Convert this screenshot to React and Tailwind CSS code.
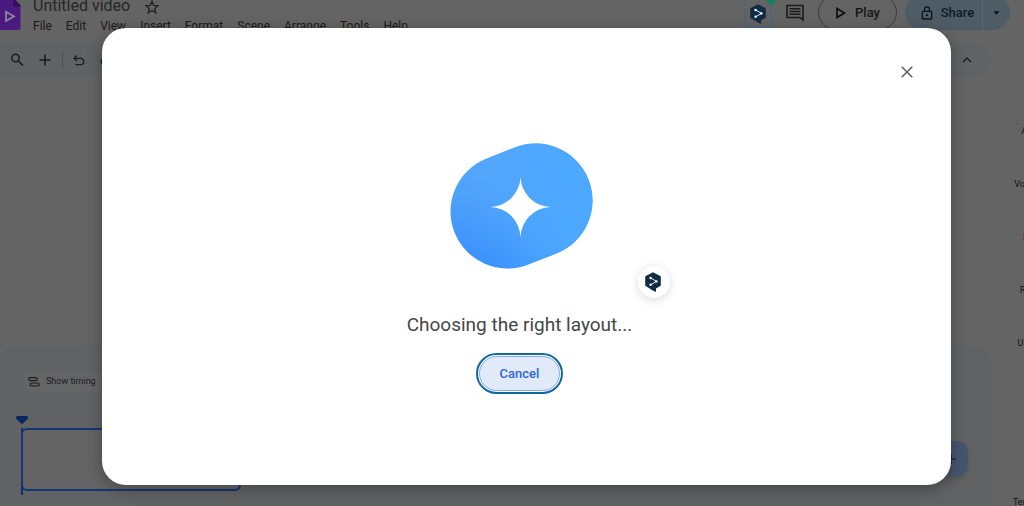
import React from "react";

function DeepLMark({ className }) {
  return (
    <svg viewBox="0 0 16 20" className={className} aria-hidden="true">
      <path
        d="M8 0.2 15.3 4.1Q15.8 4.4 15.8 5V13.2Q15.8 13.8 15.3 14.1L11 16.5V20L7.4 18.3 0.7 14.1Q0.2 13.8 0.2 13.2V5Q0.2 4.4 0.7 4.1Z"
        fill="#0f2b46"
      />
      <path d="M5.6 6 11.6 9.4 5.6 12.8" fill="none" stroke="#fff" strokeWidth="0.9" />
      <circle cx="5.6" cy="6" r="1.2" fill="#fff" />
      <circle cx="11.4" cy="9.4" r="1.2" fill="#fff" />
      <circle cx="5.6" cy="12.8" r="1.2" fill="#fff" />
    </svg>
  );
}

const menus = ["File", "Edit", "View", "Insert", "Format", "Scene", "Arrange", "Tools", "Help"];
const tools = ["Avatar", "Voiceover", "Icons", "Record", "Uploads"];

function Header() {
  return (
    <header className="flex h-9 items-start">
      <svg viewBox="0 0 21 30" className="h-[30px] w-[21px] shrink-0" aria-hidden="true">
        <path d="M0 0H13L20.500 7V28Q20.500 30 18.500 30H0Z" fill="#4a1a80" />
        <path d="M13 0V5Q13 7 15 7H20.500V5L15.500 0Z" fill="#35105f" />
        <path d="M6 11.800V21L14 16.400Z" fill="none" stroke="#8d829a" strokeWidth="1.800" />
      </svg>
      <div className="-mt-1 ml-3 flex-1">
        <div className="flex h-5 items-center gap-[14px]">
          <h1 className="text-[16px] leading-5 text-[#262626]">Untitled video</h1>
          <button aria-label="Star" className="pt-[2px]">
            <svg viewBox="0 0 24 24" className="h-4 w-4" fill="none" stroke="#222" strokeWidth="2">
              <path d="M12 3.500 14.500 9.500 21 10 16 14.300 17.600 20.700 12 17.300 6.400 20.700 8 14.300 3 10 9.500 9.500Z" />
            </svg>
          </button>
        </div>
        <nav className="flex gap-[14px] text-[12px] leading-5 text-[#1a1a1a]">
          {menus.map((m) => (
            <button key={m}>{m}</button>
          ))}
        </nav>
      </div>
      <div className="flex items-start pr-[14px]">
        <button
          aria-label="DeepL"
          className="relative flex h-7 w-7 items-center justify-center border border-t-0 border-[#3f6b82] bg-[#646464]"
        >
          <DeepLMark className="h-5 w-4" />
          <span className="absolute -right-1 -top-1 h-2 w-2 rounded-full bg-[#07875f]" />
        </button>
        <button aria-label="Comments" className="ml-[14px] mt-1">
          <svg viewBox="0 0 18 18" className="h-[18px] w-[18px]" fill="none" stroke="#1b1b1b" strokeWidth="1.600">
            <path d="M1 1.500H17V16L14 13.500H1Z" />
            <path d="M3.500 4.700H14.500M3.500 7.500H14.500M3.500 10.300H14.500" strokeWidth="1.400" />
          </svg>
        </button>
        <button className="-mt-[5px] ml-[14px] flex h-[35px] w-[79px] items-center justify-center gap-2 rounded-full border border-[#3c3c3c] text-[13px] font-medium text-[#161616]">
          <svg viewBox="0 0 12 12" className="h-3 w-3" fill="none" stroke="#0c0c0c" strokeWidth="1.600">
            <path d="M2 1.500V10.500L9.500 6Z" />
          </svg>
          Play
        </button>
        <div className="-mt-[5px] ml-2 flex h-[35px] overflow-hidden rounded-full bg-[#4e5c66] text-[13px] font-medium text-[#0d1a24]">
          <button className="flex w-[77px] items-center justify-center gap-2 pl-2">
            <svg viewBox="0 0 14 16" className="h-[14px] w-3" fill="none" stroke="#07131d" strokeWidth="1.500">
              <rect x="1.500" y="6" width="11" height="9" rx="1" />
              <path d="M4.200 6V3.600a2.800 2.800 0 0 1 5.600 0V6" />
              <circle cx="7" cy="10.500" r="1.200" fill="#07131d" stroke="none" />
            </svg>
            Share
          </button>
          <button aria-label="Share options" className="flex w-7 items-center justify-center border-l border-[#5a6870]">
            <svg viewBox="0 0 8 4" className="h-1 w-[7px]" fill="#07131d">
              <path d="M0.500 0H7.500L4 4Z" />
            </svg>
          </button>
        </div>
      </div>
    </header>
  );
}

function Toolbar() {
  return (
    <div className="mt-[7px] flex h-[34px] items-center rounded-r-full bg-[#606264] text-[#1c1c1c]">
      <button aria-label="Search" className="ml-[10px]">
        <svg viewBox="0 0 14 14" className="h-[14px] w-[14px]" fill="none" stroke="currentColor" strokeWidth="1.500">
          <circle cx="5.500" cy="5" r="3.700" />
          <path d="M8.200 7.800 13 12.600" />
        </svg>
      </button>
      <button aria-label="New scene" className="ml-[15px]">
        <svg viewBox="0 0 12 12" className="h-3 w-3" stroke="currentColor" strokeWidth="1.600">
          <path d="M6 0.500V11.500M0.500 6H11.500" />
        </svg>
      </button>
      <span className="ml-[11px] h-[18px] w-px bg-[#505355]" />
      <button aria-label="Undo" className="ml-[10px]">
        <svg viewBox="0 0 12 12" className="h-3 w-3" fill="none" stroke="currentColor" strokeWidth="1.300">
          <path d="M4 1.500 1.200 4.300 4 7.100M1.200 4.300H7.500a3.200 3.200 0 0 1 0 6.400H2.500" />
        </svg>
      </button>
      <button aria-label="Redo" className="ml-[15px]">
        <svg viewBox="0 0 12 12" className="h-3 w-3" fill="none" stroke="currentColor" strokeWidth="1.300">
          <path d="M8 1.500 10.800 4.300 8 7.100M10.800 4.300H4.500a3.200 3.200 0 0 0 0 6.400H9.500" />
        </svg>
      </button>
      <button aria-label="Hide menus" className="ml-auto mr-[18px]">
        <svg viewBox="0 0 10 6" className="h-[6px] w-[10px]" fill="none" stroke="currentColor" strokeWidth="1.400">
          <path d="M1 5 5 1 9 5" />
        </svg>
      </button>
    </div>
  );
}

function Timeline() {
  return (
    <section className="flex h-40 flex-col rounded-t-2xl bg-[#606264]">
      <button className="ml-[22px] mt-[25px] flex h-[21px] w-[100px] shrink-0 items-center gap-[6px] rounded-full bg-[#646566] pl-[6px] text-[9px] text-[#1e1e1e]">
        <svg viewBox="0 0 12 10" className="h-[10px] w-3" fill="none" stroke="#1e1e1e" strokeWidth="1.200">
          <rect x="0.700" y="0.700" width="8.500" height="3" rx="1.500" />
          <rect x="2.200" y="6" width="9" height="3" rx="1.500" />
        </svg>
        Show timing
      </button>
      <svg viewBox="0 0 12 8" className="ml-4 mt-6 h-2 w-3 shrink-0" fill="#062863" aria-hidden="true">
        <path d="M1.500 0H10.500Q12 0 12 1.500V2.500L7 7.500Q6 8.300 5 7.500L0 2.500V1.500Q0 0 1.500 0Z" />
      </svg>
      <div className="flex items-start justify-between pl-[21px] pr-[22px]">
        <div className="mt-1 h-[67px] w-[220px] border-l-2 border-[#0b2f73]">
          <div className="-ml-[2px] h-[63px] w-[220px] rounded-[6px] border-2 border-[#153776] bg-[#646464]" />
        </div>
        <button
          aria-label="Add scene"
          className="mt-[17px] flex h-[35px] w-[35px] items-center justify-center rounded-[10px] bg-[#46556f] shadow-md"
        >
          <svg viewBox="0 0 10 10" className="h-[10px] w-[10px]" stroke="#0a1730" strokeWidth="1.200">
            <path d="M5 0V10M0 5H10" />
          </svg>
        </button>
      </div>
    </section>
  );
}

function SideRail() {
  return (
    <aside className="flex w-[34px] flex-col justify-between overflow-hidden text-[9px] leading-[11px] text-[#111]">
      <div className="flex w-[88px] flex-col items-center gap-[42px] pt-[90px]">
        {tools.map((t) => (
          <button key={t}>{t}</button>
        ))}
      </div>
      <div className="-mb-[2px] flex w-[88px] justify-center">
        <button>Templates</button>
      </div>
    </aside>
  );
}

function Dialog() {
  return (
    <div className="absolute inset-0 flex pb-[21px] pl-[102px] pr-[73px] pt-7">
      <div
        role="dialog"
        aria-labelledby="status"
        className="relative flex flex-1 flex-col items-center rounded-3xl bg-white pr-[14px] shadow-[0_4px_16px_rgba(0,0,0,0.3)]"
      >
        <button aria-label="Close" className="-mr-[14px] mt-[38px] self-end pr-[38px]">
          <svg viewBox="0 0 12 12" className="h-3 w-3" stroke="#5f6368" strokeWidth="1.600">
            <path d="M0.700 0.700 11.300 11.300M11.300 0.700 0.700 11.300" />
          </svg>
        </button>
        <svg viewBox="0 0 143 126" className="ml-[3px] mt-[65px] h-[126px] w-[143px] shrink-0" aria-hidden="true">
          <defs>
            <linearGradient id="blob" gradientUnits="userSpaceOnUse" x1="38" y1="122" x2="62" y2="38">
              <stop offset="0" stopColor="#3b92fd" />
              <stop offset="0.550" stopColor="#4b9ffb" />
              <stop offset="1" stopColor="#53a6fb" />
            </linearGradient>
            <linearGradient id="sheen" gradientUnits="userSpaceOnUse" x1="30" y1="75" x2="110" y2="55">
              <stop offset="0" stopColor="#4da8ff" stopOpacity="0" />
              <stop offset="1" stopColor="#4da8ff" />
            </linearGradient>
          </defs>
          <path d="M57.500 68.500 85.500 57.500" stroke="url(#blob)" strokeWidth="114" strokeLinecap="round" />
          <path d="M57.500 68.500 85.500 57.500" stroke="url(#sheen)" strokeWidth="114" strokeLinecap="round" />
          <path d="M70.500 34A31 31 0 0 0 100.500 64A31 31 0 0 0 70.500 94A31 31 0 0 0 40.500 64A31 31 0 0 0 70.500 34Z" fill="#fff" />
        </svg>
        <p id="status" className="mt-[42px] text-[19px] leading-7 text-[#444746]">
          Choosing the right layout...
        </p>
        <button className="mt-[14px] flex h-[41px] w-[87px] rounded-full border-2 border-[#12699a] bg-white p-px text-[13px] font-medium text-[#2f66d8]">
          <span className="flex flex-1 items-center justify-center self-stretch rounded-full border border-[#86a8ee] bg-[#e1eaf9]">
            Cancel
          </span>
        </button>
        <button
          aria-label="Translate"
          className="absolute left-[536px] top-[238px] flex h-8 w-8 items-center justify-center rounded-full bg-white pr-[2px] shadow-[0_2px_10px_rgba(0,0,0,0.15)]"
        >
          <DeepLMark className="h-5 w-4" />
        </button>
      </div>
    </div>
  );
}

export default function App() {
  return (
    <div className="relative flex min-h-screen flex-col overflow-hidden bg-[#646464] font-['Roboto',sans-serif]">
      <Header />
      <div className="flex flex-1">
        <main className="flex flex-1 flex-col">
          <Toolbar />
          <div className="flex-1" />
          <Timeline />
        </main>
        <SideRail />
      </div>
      <Dialog />
    </div>
  );
}
